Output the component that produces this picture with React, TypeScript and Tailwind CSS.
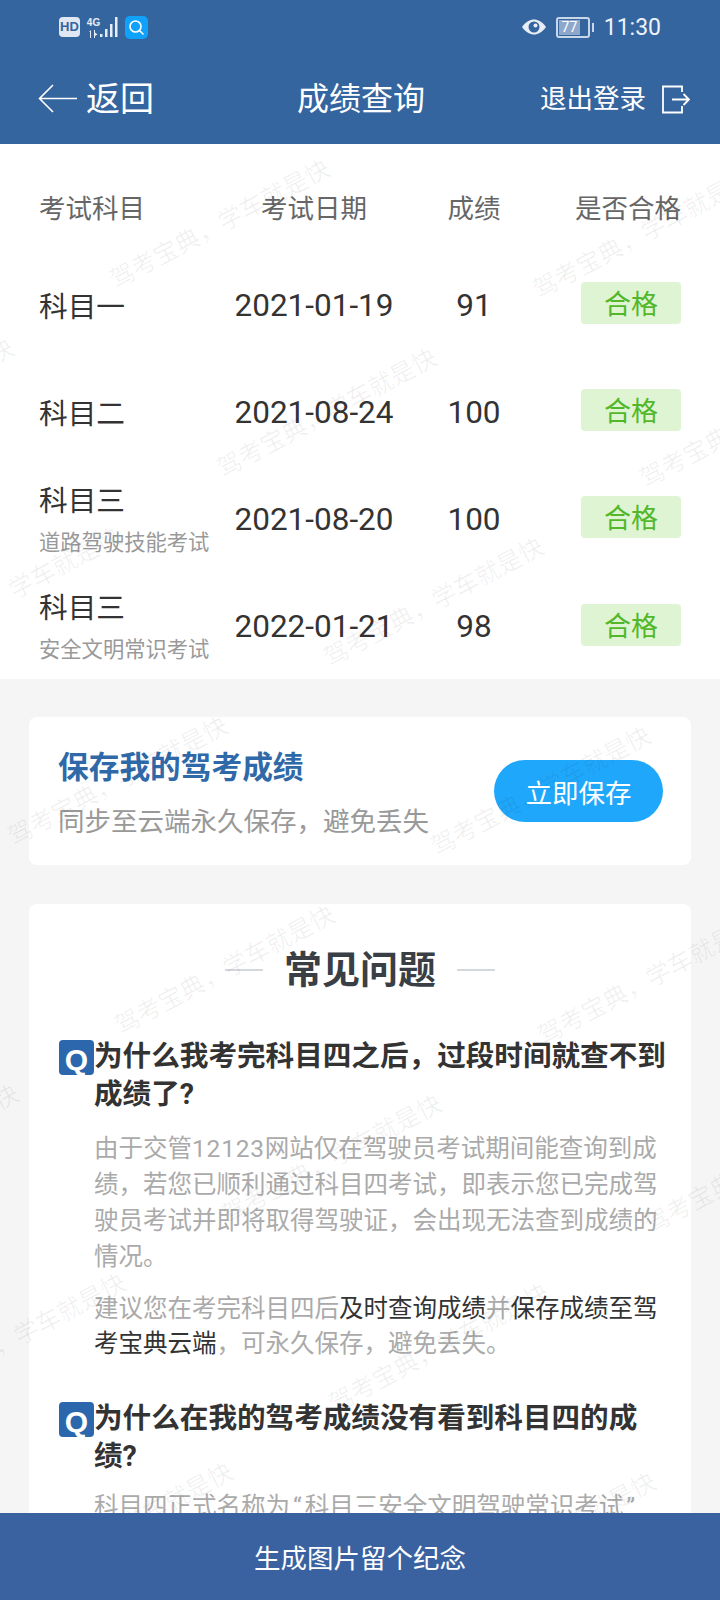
import React from 'react';

const scores = [
  { name: '科目一', date: '2021-01-19', score: '91' },
  { name: '科目二', date: '2021-08-24', score: '100' },
  { name: '科目三', note: '道路驾驶技能考试', date: '2021-08-20', score: '100' },
  { name: '科目三', note: '安全文明常识考试', date: '2022-01-21', score: '98' },
];

// watermark stamps repeat on a slanted lattice
const stamps: { x: number; y: number }[] = [];
for (let row = -1; row < 8; row++) {
  for (let col = -2; col < 3; col++) {
    const x = 112 + col * 423 + row * 107;
    if (x > -230 && x < 720) {
      stamps.push({ x, y: 126 + col * 10 + row * 189 });
    }
  }
}

const StatusBar = () => (
  <div className="flex h-[54px] items-center justify-between pl-[59px] pr-[59px] text-white">
    <div className="flex items-center">
      <span className="flex h-[20px] w-[21px] items-center justify-center rounded-[4px] bg-[#dfe7f2] font-['Liberation_Sans',sans-serif] text-[13px] font-bold text-[#35659f]">
        HD
      </span>
      <div className="ml-[7px] flex w-[13px] flex-col items-center">
        <span className="font-['Liberation_Sans',sans-serif] text-[10px] font-bold leading-[11px] text-[#e6edf6]">4G</span>
        <svg width="12" height="8" viewBox="0 0 12 8" fill="#e6edf6" className="mt-[2px]">
          <path d="M1 2L3 0V8H2V2ZM6 0H7V8H6ZM7 2.500L9.500 4.500L7 6Z" />
        </svg>
      </div>
      <svg width="21" height="22" viewBox="0 0 21 22" fill="#e6edf6">
        <rect x="0" y="18" width="2.500" height="3" />
        <rect x="5" y="13" width="2.500" height="8" />
        <rect x="10" y="8" width="2.500" height="13" />
        <rect x="15" y="1" width="2.500" height="20" />
      </svg>
      <span className="ml-[4px] flex h-[23px] w-[23px] items-center justify-center rounded-[5px] bg-[#10a2fb]">
        <svg width="17" height="17" viewBox="0 0 17 17" fill="none" stroke="white" strokeWidth="1.6" strokeLinecap="round">
          <circle cx="7.5" cy="7.5" r="5.5" />
          <path d="M11.5 11.5L15 15" />
        </svg>
      </span>
    </div>
    <div className="flex items-center">
      <svg width="26" height="18" viewBox="0 0 26 18">
        <path d="M1 9C5 3.5 9 1.5 13 1.5S21 3.5 25 9c-4 5.500-8 7.500-12 7.500S5 14.500 1 9Z" fill="#e8eef6" />
        <circle cx="13" cy="9" r="5.500" fill="#35659f" />
        <circle cx="14.500" cy="7.500" r="2" fill="#e8eef6" />
      </svg>
      <div className="ml-[9px] flex items-center">
        <div className="h-[21px] w-[34px] rounded-[3px] border-2 border-[#c9d7e8] p-[1px]">
          <div className="flex h-full w-[77%] items-center justify-center bg-[#8ea8cc] font-['Roboto',sans-serif] text-[14px] leading-none text-white">
            77
          </div>
        </div>
        <span className="ml-[2px] h-[9px] w-[2px] bg-[#c9d7e8]" />
      </div>
      <span className="ml-[10px] pt-[1px] font-['Roboto',sans-serif] text-[23px] leading-none text-[#edf2f8]">11:30</span>
    </div>
  </div>
);

const NavBar = () => (
  <div className="grid h-[90px] grid-cols-[259px_auto_1fr] items-center pl-[38px] pr-[30px] text-white">
    <div className="flex items-center">
      <svg width="40" height="30" viewBox="0 0 40 30" fill="none" stroke="white" strokeWidth="1.6">
        <path d="M15 1L1.500 14.500L15 28M1.500 14.500H39" />
      </svg>
      <span className="ml-[8px] text-[34px] leading-none">返回</span>
    </div>
    <span className="text-[32px] leading-none">成绩查询</span>
    <div className="flex items-center justify-end">
      <span className="text-[26.500px] leading-none">退出登录</span>
      <svg width="29" height="29" viewBox="0 0 29 29" className="ml-[15px]" fill="none" stroke="white" strokeWidth="1.8">
        <path d="M21 7V1.500H2V27.500H21V21M11 14.500H27.500M22.500 9L28 14.500L22.500 20" />
      </svg>
    </div>
  </div>
);

const ScoreTable = () => (
  <div className="bg-white px-[39px] pb-[1px]">
    <div className="grid h-[105px] grid-cols-[195px_160px_160px_1fr] items-center pt-[25px] text-[26.500px] text-[#666]">
      <span>考试科目</span>
      <span className="text-center">考试日期</span>
      <span className="text-center">成绩</span>
      <span className="text-right">是否合格</span>
    </div>
    {scores.map((item, i) => (
      <div key={i} className="grid h-[107.3px] grid-cols-[195px_160px_160px_1fr] items-center">
        <div className={item.note ? 'pt-[4px]' : 'pt-[9px]'}>
          <div className="text-[28.700px] leading-[40px] text-[#333]">{item.name}</div>
          {item.note && <div className="mt-[7px] text-[21.300px] leading-[30px] text-[#999]">{item.note}</div>}
        </div>
        <span className="whitespace-nowrap pt-[5px] text-center font-['Roboto',sans-serif] text-[31.500px] text-[#333]">{item.date}</span>
        <span className="pt-[5px] text-center font-['Roboto',sans-serif] text-[31.500px] text-[#333]">{item.score}</span>
        <div className="flex justify-end">
          <span className="flex h-[42px] w-[100px] items-center justify-center rounded-[4px] bg-[#dff4d2] pt-[5px] text-[27px] leading-none text-[#52b82a]">
            合格
          </span>
        </div>
      </div>
    ))}
  </div>
);

const SaveCard = () => (
  <div className="mx-[29px] mt-[38px] flex h-[148px] items-center justify-between rounded-[8px] bg-white pl-[29px] pr-[28px]">
    <div className="pt-[8px]">
      <div className="text-[30.700px] font-bold leading-[40px] text-[#2f69a8]">保存我的驾考成绩</div>
      <div className="mt-[14px] text-[26.500px] leading-[40px] text-[#999]">同步至云端永久保存，避免丢失</div>
    </div>
    <button className="h-[62px] w-[169px] rounded-full bg-[#1fa8fb] pt-[5px] text-[26.500px] text-white">立即保存</button>
  </div>
);

const Question = ({ text, className }: { text: string; className: string }) => (
  <div className={`flex ${className}`}>
    <span className="mt-[3px] flex h-[35px] w-[35px] shrink-0 items-center justify-center rounded-[4px] bg-[#2c67ad] pt-[5px] font-['Liberation_Sans',sans-serif] text-[30px] font-bold leading-none text-white">
      Q
    </span>
    <h3 className="text-[28.600px] font-bold leading-[38px] text-[#333]">{text}</h3>
  </div>
);

const Faq = () => (
  <div className="mx-[29px] mt-[39px] rounded-[8px] bg-white pl-[30px] pr-[22px] pt-[40px]">
    <div className="flex items-center justify-center gap-[21px] pr-[8px]">
      <span className="h-[2px] w-[38px] bg-[#d5d8db]" />
      <h2 className="text-[38px] font-bold leading-[52px] text-[#3a3f45]">常见问题</h2>
      <span className="h-[2px] w-[38px] bg-[#d5d8db]" />
    </div>
    <Question className="mt-[41px]" text="为什么我考完科目四之后，过段时间就查不到成绩了?" />
    <div className="ml-[35px] text-[24.500px] text-[#aaa]">
      <p className="mt-[18px] leading-[36px]">
        由于交管<span className="tracking-[0.8px]">12123</span>网站仅在驾驶员考试期间能查询到成绩，若您已顺利通过科目四考试，即表示您已完成驾驶员考试并即将取得驾驶证，会出现无法查到成绩的情况。
      </p>
      <p className="mt-[16px] leading-[35px]">
        建议您在考完科目四后<span className="text-[#333]">及时查询成绩</span>并<span className="text-[#333]">保存成绩至驾考宝典云端</span>，可永久保存，避免丢失。
      </p>
    </div>
    <Question className="mt-[38px]" text="为什么在我的驾考成绩没有看到科目四的成绩?" />
    <div className="ml-[35px] text-[24.500px] leading-[36px] text-[#aaa]">
      <p className="mt-[14px]">
        科目四正式名称为<span className="px-[3px]">“</span>科目三安全文明驾驶常识考试<span className="px-[3px]">”</span>
      </p>
    </div>
  </div>
);

const App = () => (
  <div className="flex h-[1600px] w-[720px] flex-col overflow-hidden bg-[#f5f5f5] font-['Roboto','Noto_Sans_CJK_SC',sans-serif]">
    <header className="shrink-0 bg-[#35659f]">
      <StatusBar />
      <NavBar />
    </header>
    <main className="relative min-h-0 flex-1 overflow-hidden">
      <ScoreTable />
      <SaveCard />
      <Faq />
      <div className="pointer-events-none absolute inset-0 overflow-hidden">
        {stamps.map((s, i) => (
          <span
            key={i}
            className="absolute origin-left -rotate-[28deg] whitespace-nowrap text-[24.500px] leading-none text-black/[0.06]"
            style={{ left: s.x, top: s.y }}
          >
            驾考宝典，学车就是快
          </span>
        ))}
      </div>
    </main>
    <button className="h-[87px] shrink-0 bg-[#3a62a0] pt-[4px] text-[26.500px] text-white">生成图片留个纪念</button>
  </div>
);

export default App;
